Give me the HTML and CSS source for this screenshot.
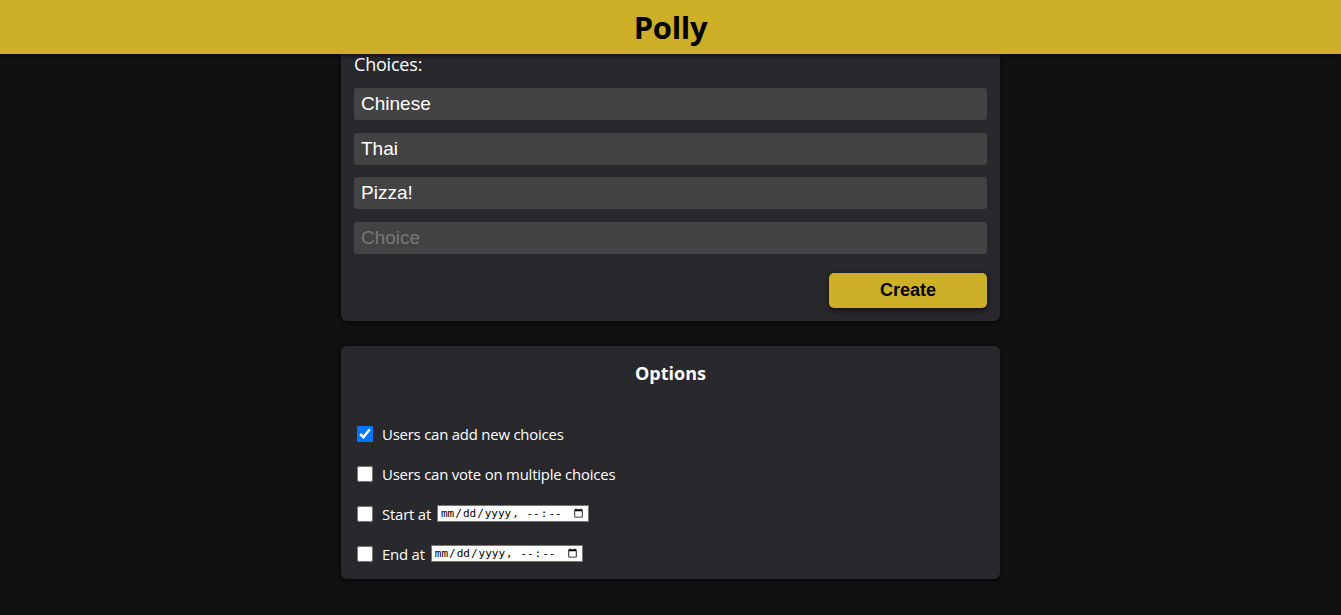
FILE: index.html
```html
<!DOCTYPE html>
<html>
<head>
<meta charset="utf-8">
<title>Polly</title>
<link rel="stylesheet" href="styles.css">
</head>
<body>
<header class="topbar"><h1 class="brand">Polly</h1></header>
<main class="page">
  <section class="card card-choices">
    <div class="label">Choices:</div>
    <input class="choice" type="text" value="Chinese">
    <input class="choice" type="text" value="Thai">
    <input class="choice" type="text" value="Pizza!">
    <input class="choice" type="text" placeholder="Choice">
    <div class="actions"><button class="create">Create</button></div>
  </section>
  <section class="card card-options">
    <h2 class="options-title">Options</h2>
    <div class="opts">
      <label class="opt"><input type="checkbox" checked><span>Users can add new choices</span></label>
      <label class="opt"><input type="checkbox"><span>Users can vote on multiple choices</span></label>
      <label class="opt"><input type="checkbox"><span>Start at</span><input class="dt" type="datetime-local"></label>
      <label class="opt"><input type="checkbox"><span>End at</span><input class="dt" type="datetime-local"></label>
    </div>
  </section>
</main>
</body>
</html>
```
FILE: styles.css
```css
html, body { margin: 0; padding: 0; }
body {
  background: #111111;
  color: #ffffff;
  font-family: "Open Sans", "Noto Sans", sans-serif;
  height: 615px;
  overflow: hidden;
}
.topbar {
  height: 54px;
  background: #cdb027;
  display: flex;
  align-items: center;
  justify-content: center;
  box-shadow: 0 2px 4px rgba(0,0,0,0.5);
  position: relative;
  z-index: 2;
}
.brand {
  margin: 0;
  font-size: 31px;
  font-weight: 700;
  color: #000;
  letter-spacing: -0.3px;
  line-height: 1;
}
.page {
  width: 659px;
  margin: 0 auto;
  display: flex;
  flex-direction: column;
  gap: 25px;
}
.card {
  background: #28282d;
  border-radius: 6px;
  box-shadow: 0 2px 5px rgba(0,0,0,0.6);
  padding: 0 13px;
}
.card-choices {
  border-top-left-radius: 0;
  border-top-right-radius: 0;
  padding-top: 0;
  padding-bottom: 13px;
  display: flex;
  flex-direction: column;
}
.label {
  font-size: 18px;
  height: 34px;
  line-height: 20px;
  letter-spacing: -0.2px;
}
.choice {
  height: 32px;
  box-sizing: border-box;
  border: none;
  border-radius: 3px;
  background: #434343;
  color: #ffffff;
  font-family: "Liberation Sans", Arial, sans-serif;
  font-size: 19px;
  padding: 0 7px;
  margin-bottom: 12.6px;
  outline: none;
}
.choice::placeholder { color: #777777; }
.actions {
  display: flex;
  justify-content: flex-end;
  padding-top: 7px;
}
.create {
  width: 158px;
  height: 35px;
  border: none;
  border-radius: 5px;
  background: #cdb027;
  color: #000;
  font-family: "Liberation Sans", Arial, sans-serif;
  font-weight: 700;
  font-size: 18px;
  box-shadow: 0 2px 6px rgba(0,0,0,0.6);
}
.card-options {
  padding-top: 15px;
  padding-bottom: 14px;
}
.options-title {
  margin: 0;
  text-align: center;
  font-size: 18px;
  font-weight: 700;
  line-height: 24px;
}
.opts {
  display: flex;
  flex-direction: column;
  padding-top: 37px;
  gap: 17px;
}
.opt {
  display: flex;
  align-items: center;
  height: 23px;
  font-size: 14.9px;
  letter-spacing: -0.2px;
  padding-left: 2px;
}
.opt input[type=checkbox] {
  width: 16px;
  height: 16px;
  margin: 0 9px 0 1px;
}
.opt span { margin-right: 6px; }
.dt {
  height: 17px;
  box-sizing: border-box;
  width: 152px;
  font-size: 11px;
  padding: 0 2px;
  border: 1px solid #767676;
  background: #fff;
  color: #000;
}
```
